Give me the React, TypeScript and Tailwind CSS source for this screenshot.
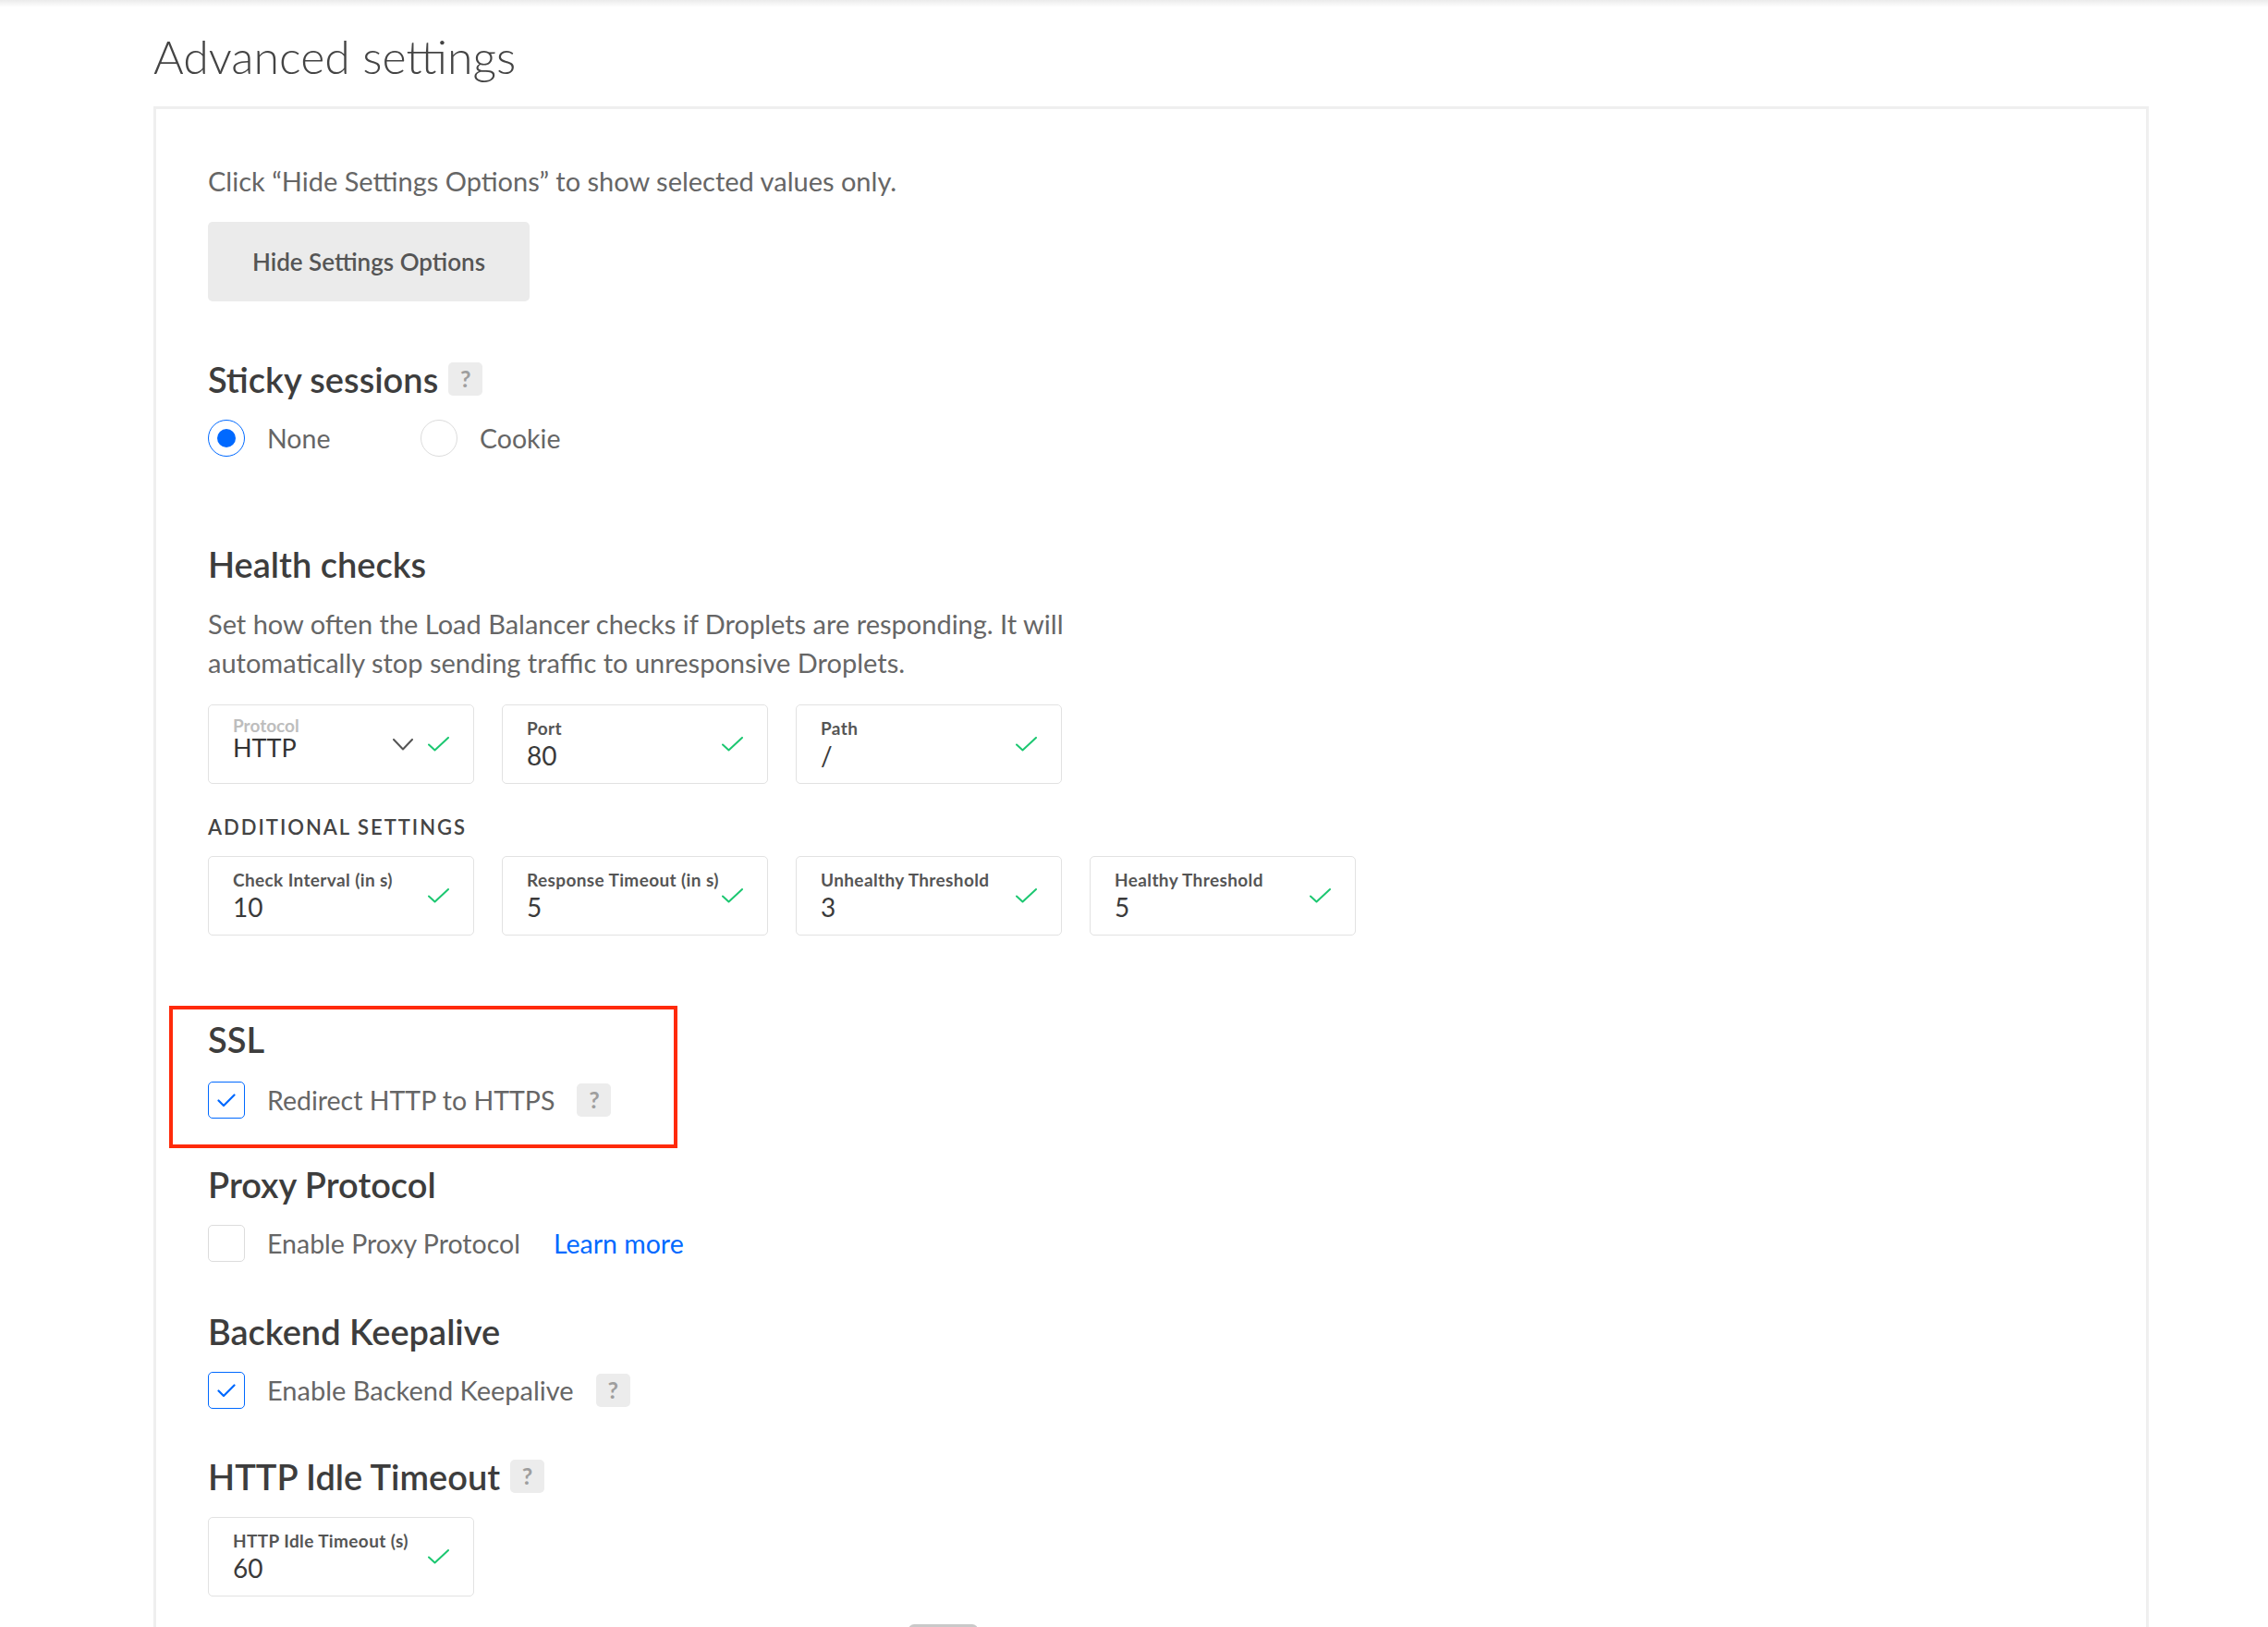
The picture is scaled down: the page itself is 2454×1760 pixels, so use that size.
import React, { useState } from 'react';

const FONT = { fontFamily: 'Lato, "Noto Sans", sans-serif' };

const Check: React.FC = () => (
  <svg width="23" height="16" viewBox="0 0 23 16" fill="none" className="shrink-0">
    <path d="M1 8.5 L7.5 14.5 L22 1" stroke="#1cc771" strokeWidth="2" strokeLinecap="round" strokeLinejoin="round" />
  </svg>
);

const Chevron: React.FC = () => (
  <svg width="22" height="13" viewBox="0 0 22 13" fill="none" className="shrink-0">
    <path d="M1 1 L11 11.5 L21 1" stroke="#555" strokeWidth="2" strokeLinecap="round" strokeLinejoin="round" />
  </svg>
);

const Help: React.FC = () => (
  <span className="inline-flex items-center justify-center w-[37px] h-[36px] rounded-[5px] bg-[#ececec] text-[#9e9e9e] text-[25px] font-bold">
    ?
  </span>
);

const Heading: React.FC<{ children: React.ReactNode; help?: boolean; className?: string }> = ({ children, help, className = '' }) => (
  <div className={`flex items-center gap-[11px] h-[44px] ${className}`}>
    <h3 className="text-[38px] font-semibold text-[#3d3d3d] leading-none">{children}</h3>
    {help && <Help />}
  </div>
);

const Field: React.FC<{ label: string; value: string }> = ({ label, value }) => (
  <div className="w-[288px] h-[86px] border border-[#e2e2e2] rounded-[5px] pl-[26px] pr-[26px] flex items-center justify-between">
    <div className="flex flex-col pt-[2px]">
      <span className="text-[19px] font-bold text-[#555] leading-[22px] tracking-[0.02em]">{label}</span>
      <span className="text-[28px] text-[#3a3a3a] leading-[36px]">{value}</span>
    </div>
    <Check />
  </div>
);

const Checkbox: React.FC<{ checked: boolean; onClick: () => void }> = ({ checked, onClick }) => (
  <button
    onClick={onClick}
    className={`w-[40px] h-[40px] rounded-[5px] border flex items-center justify-center bg-white ${checked ? 'border-[#0069ff]' : 'border-[#dcdcdc]'}`}
  >
    {checked && (
      <svg width="20" height="15" viewBox="0 0 20 15" fill="none">
        <path d="M1.5 7.5 L7 13 L18.5 1.5" stroke="#0069ff" strokeWidth="2.2" strokeLinecap="round" strokeLinejoin="round" />
      </svg>
    )}
  </button>
);

const App: React.FC = () => {
  const [sticky, setSticky] = useState<'none' | 'cookie'>('none');
  const [ssl, setSsl] = useState(true);
  const [proxy, setProxy] = useState(false);
  const [keepalive, setKeepalive] = useState(true);

  return (
    <div className="w-[2454px] h-[1760px] overflow-hidden bg-white" style={FONT}>
      <div className="h-[8px] bg-gradient-to-b from-[#ebebeb] to-white" />

      <main className="pl-[166px] pr-[129px]">
        <h1 className="mt-[23px] text-[50px] font-light text-[#444] leading-[60px]">Advanced settings</h1>

        <div className="mt-[24px] border-[3px] border-b-0 border-[#efefef] pl-[56px] pt-[60px]">
          {/* Intro */}
          <p className="text-[29px] text-[#666] leading-[36px]">
            Click “Hide Settings Options” to show selected values only.
          </p>
          <button className="mt-[26px] w-[348px] h-[86px] rounded-[5px] bg-[#ebebeb] text-[26px] font-semibold text-[#555]">
            Hide Settings Options
          </button>

          {/* Sticky sessions */}
          <Heading help className="mt-[62px]">Sticky sessions</Heading>
          <div className="mt-[22px] flex items-center h-[40px]">
            <button onClick={() => setSticky('none')} className="flex items-center gap-[24px] w-[230px]">
              <span className={`w-[40px] h-[40px] rounded-full border flex items-center justify-center ${sticky === 'none' ? 'border-[#0069ff]' : 'border-[#dcdcdc]'}`}>
                {sticky === 'none' && <span className="w-[20px] h-[20px] rounded-full bg-[#0069ff]" />}
              </span>
              <span className="text-[28.5px] text-[#666]">None</span>
            </button>
            <button onClick={() => setSticky('cookie')} className="flex items-center gap-[24px]">
              <span className={`w-[40px] h-[40px] rounded-full border flex items-center justify-center ${sticky === 'cookie' ? 'border-[#0069ff]' : 'border-[#dcdcdc]'}`}>
                {sticky === 'cookie' && <span className="w-[20px] h-[20px] rounded-full bg-[#0069ff]" />}
              </span>
              <span className="text-[28.5px] text-[#666]">Cookie</span>
            </button>
          </div>

          {/* Health checks */}
          <Heading className="mt-[94px]">Health checks</Heading>
          <p className="mt-[22px] w-[960px] text-[29px] text-[#666] leading-[42px]">
            Set how often the Load Balancer checks if Droplets are responding. It will automatically stop sending traffic to unresponsive Droplets.
          </p>

          <div className="mt-[24px] flex gap-[30px]">
            <div className="w-[288px] h-[86px] border border-[#e2e2e2] rounded-[5px] pl-[26px] pr-[26px] flex items-center justify-between">
              <div className="flex flex-col -mt-[13px]">
                <span className="text-[19px] font-bold text-[#bdbdbd] leading-[20px]">Protocol</span>
                <span className="text-[27px] text-[#333] leading-[28px]">HTTP</span>
              </div>
              <div className="flex items-center gap-[16px]">
                <Chevron />
                <Check />
              </div>
            </div>
            <Field label="Port" value="80" />
            <Field label="Path" value="/" />
          </div>

          <div className="mt-[32px] h-[28px] flex items-center text-[22px] font-semibold tracking-[0.09em] text-[#444]">
            ADDITIONAL SETTINGS
          </div>
          <div className="mt-[18px] flex gap-[30px]">
            <Field label="Check Interval (in s)" value="10" />
            <Field label="Response Timeout (in s)" value="5" />
            <Field label="Unhealthy Threshold" value="3" />
            <Field label="Healthy Threshold" value="5" />
          </div>

          {/* SSL (highlighted) */}
          <div className="mt-[76px] -ml-[42px] w-[550px] border-4 border-[#ff2a0a] pl-[38px] pt-[10px] pb-[28px]">
            <Heading>SSL</Heading>
            <div className="mt-[24px] flex items-center gap-[24px] h-[40px]">
              <Checkbox checked={ssl} onClick={() => setSsl(!ssl)} />
              <span className="text-[28.5px] text-[#666]">Redirect HTTP to HTTPS</span>
              <Help />
            </div>
          </div>

          {/* Proxy Protocol */}
          <Heading className="mt-[17px]">Proxy Protocol</Heading>
          <div className="mt-[22px] flex items-center gap-[24px] h-[40px]">
            <Checkbox checked={proxy} onClick={() => setProxy(!proxy)} />
            <span className="text-[28.5px] text-[#666]">Enable Proxy Protocol</span>
            <a className="ml-[12px] text-[28.5px] text-[#0069ff] cursor-pointer">Learn more</a>
          </div>

          {/* Backend Keepalive */}
          <Heading className="mt-[53px]">Backend Keepalive</Heading>
          <div className="mt-[22px] flex items-center gap-[24px] h-[40px]">
            <Checkbox checked={keepalive} onClick={() => setKeepalive(!keepalive)} />
            <span className="text-[29px] text-[#666]">Enable Backend Keepalive</span>
            <Help />
          </div>

          {/* HTTP Idle Timeout */}
          <Heading help className="mt-[51px]">HTTP Idle Timeout</Heading>
          <div className="mt-[22px]">
            <Field label="HTTP Idle Timeout (s)" value="60" />
          </div>

          <div className="mt-[30px] ml-[758px] w-[75px] h-[24px] rounded-[6px] bg-[#c9c9c9]" />
        </div>
      </main>
    </div>
  );
};

export default App;
